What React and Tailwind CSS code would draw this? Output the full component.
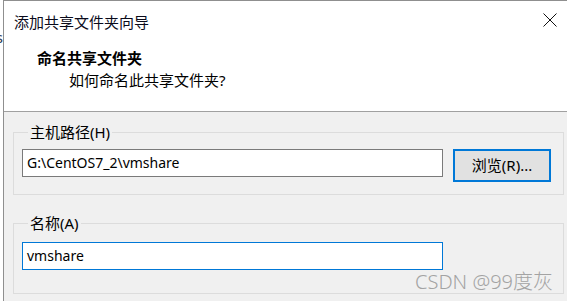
export default function App() {
  return (
    <div className="flex h-[301px] w-[567px] overflow-hidden bg-white font-['Noto_Sans','Noto_Sans_CJK_SC',sans-serif] text-black">
      {/* sliver of the window behind */}
      <div className="flex w-[3px] shrink-0 justify-end overflow-hidden pt-[27px]">
        <span className="shrink-0 text-[15px] leading-[20px] text-[#2b3a55]">s</span>
      </div>

      <div className="flex flex-1 flex-col border-l border-t border-[#8f8f8f]">
        {/* header */}
        <div className="h-[111px] shrink-0 border-b border-[#a0a0a0] bg-white">
          <div className="flex items-start justify-between pl-[10px] pr-[10px] pt-[11px]">
            <div className="text-[15px] leading-[20px] text-[#0a0a1a]">添加共享文件夹向导</div>
            <svg width="14" height="14" viewBox="0 0 14 14" className="mt-[1px]">
              <path d="M0.5 0.5L13.5 13.5M13.5 0.5L0.5 13.5" stroke="#111" strokeWidth="1" />
            </svg>
          </div>
          <div className="mt-[16px] pl-[33px] text-[15px] font-bold leading-[20px]">命名共享文件夹</div>
          <div className="mt-[2px] pl-[65px] text-[15px] leading-[20px]">如何命名此共享文件夹?</div>
        </div>

        {/* body */}
        <div className="flex flex-1 flex-col bg-[#f0f0f0] pl-[9px] pr-[3px] pt-[10px]">
          <fieldset className="border border-[#dcdcdc] pb-[12px] pl-[8px] pr-[12px] pt-[7px]">
            <legend className="ml-[6px] px-[2px] text-[15px] leading-[20px]">主机路径(H)</legend>
            <div className="flex items-start gap-[10px]">
              <div className="flex h-[28px] w-[421px] items-center border border-[#7a7a7a] bg-white pb-[1px] pl-[4px] text-[14px]">
                G:\CentOS7_2\vmshare
              </div>
              <div className="flex h-[33px] w-[98px] items-center justify-center border-2 border-[#0078d7] bg-[#e1e1e1] text-[15px]">
                浏览(R)...
              </div>
            </div>
          </fieldset>

          <fieldset className="mt-[18px] border border-[#dcdcdc] pl-[8px] pr-[10px] pt-[9px]">
            <legend className="ml-[6px] px-[2px] text-[15px] leading-[20px]">名称(A)</legend>
            <div className="flex h-[28px] w-[421px] items-center border border-[#0078d7] bg-white pb-[1px] pl-[4px] text-[14px]">
              vmshare
            </div>
            <div className="flex h-[23px] justify-end text-[20px] font-light leading-[23px] text-[#a3a3a3]">
              CSDN @99度灰
            </div>
          </fieldset>
        </div>
      </div>
    </div>
  );
}
